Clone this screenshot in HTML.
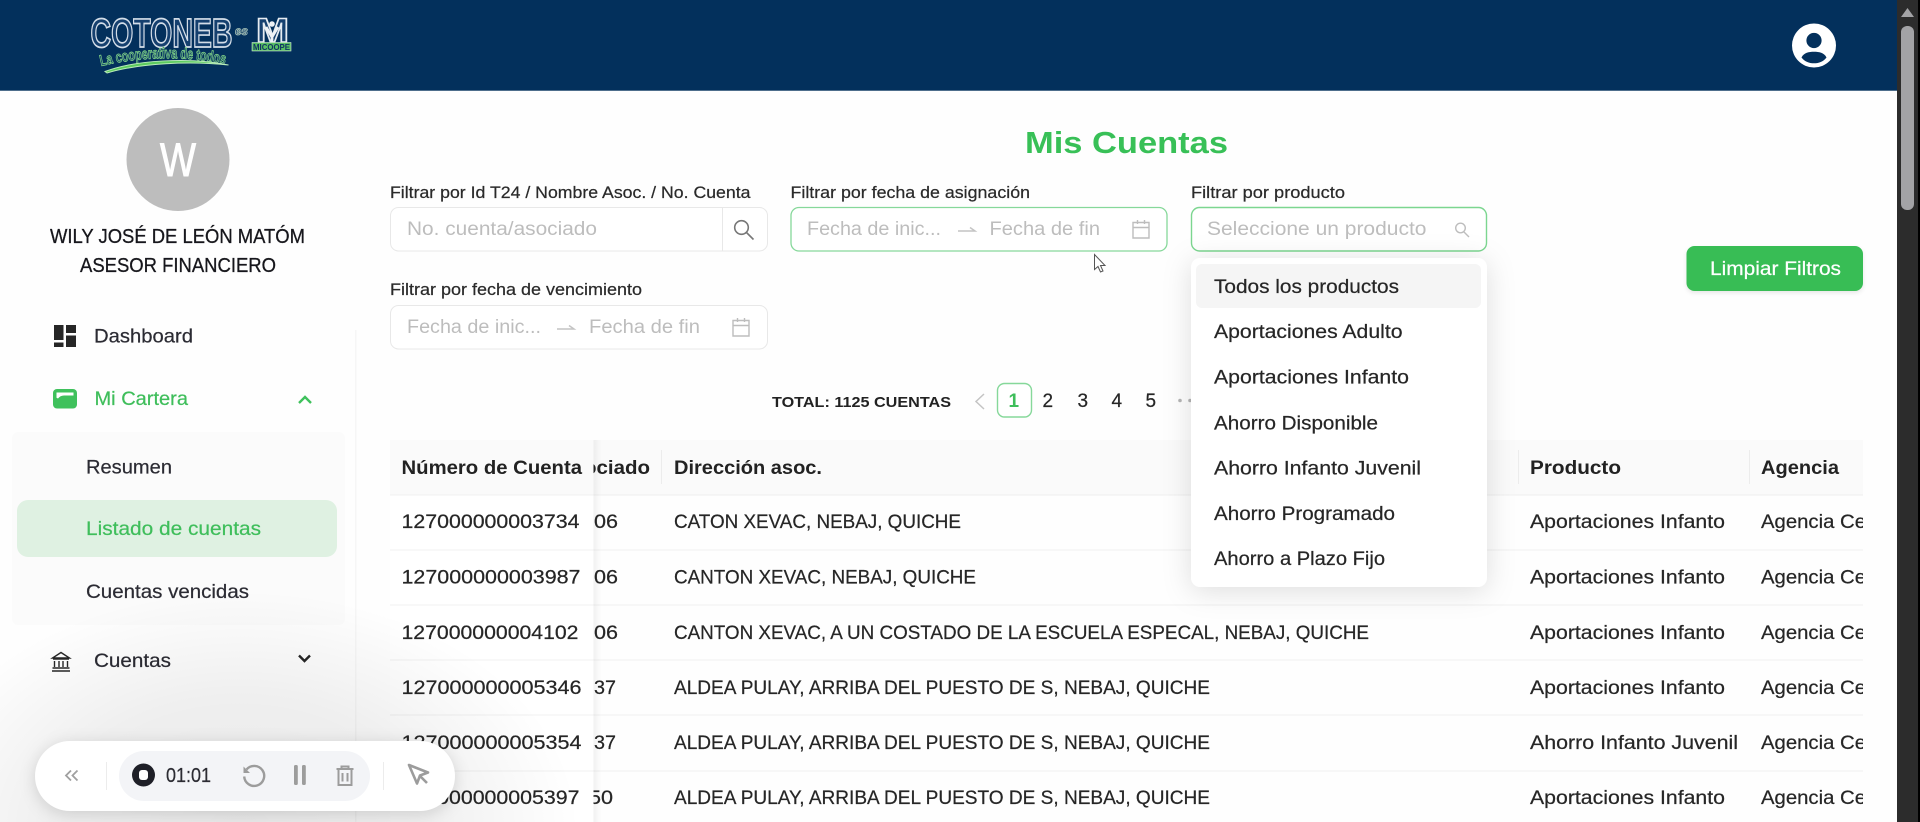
<!DOCTYPE html>
<html lang="es">
<head>
<meta charset="utf-8">
<title>Mis Cuentas</title>
<style>
html,body{margin:0;padding:0;width:1920px;height:822px;overflow:hidden;background:#fefefe}
svg{position:absolute;left:0;top:0;display:block}
text{font-family:"Liberation Sans",sans-serif;color:#262626;fill:currentColor;stroke:currentColor;stroke-width:.22px;font-size:19px}
.ph{color:#bdbdbd;font-size:19px;stroke-width:0}
.lb{font-size:16.5px;color:#2a2a2a}
.b{font-weight:bold;color:#222;stroke-width:0}
.side{font-size:19.5px;color:#2b2b33}
.g{color:#3fbe5b}
</style>
</head>
<body>
<svg width="1920" height="822" viewBox="0 0 1920 822" xmlns="http://www.w3.org/2000/svg">
<defs>
<radialGradient id="vig" gradientUnits="userSpaceOnUse" cx="240" cy="830" r="1" gradientTransform="translate(240 830) scale(340 240) translate(-240 -830)">
<stop offset="0" stop-color="#000" stop-opacity=".085"/>
<stop offset=".55" stop-color="#000" stop-opacity=".06"/>
<stop offset="1" stop-color="#000" stop-opacity="0"/>
</radialGradient>
<linearGradient id="stick" x1="0" x2="1" y1="0" y2="0">
<stop offset="0" stop-color="#000" stop-opacity=".05"/>
<stop offset="1" stop-color="#000" stop-opacity="0"/>
</linearGradient>
<clipPath id="tbl"><rect x="390" y="440" width="1473" height="382"/></clipPath>
<path id="tagarc" d="M101 66Q165 51 228 65"/>
</defs>

<!-- header -->
<rect x="0" y="0" width="1897" height="90.700" fill="#03305c"/>

<!-- logo -->
<text x="90.500" y="47" textLength="142" lengthAdjust="spacingAndGlyphs" style="font-size:41px;font-weight:bold;fill:#15406f;stroke:#d3dde8;stroke-width:1.700px">COTONEB</text>
<text x="235" y="35" textLength="13" lengthAdjust="spacingAndGlyphs" style="font-size:12px;font-style:italic;font-weight:bold;fill:#15406f;stroke:#a9c4b8;stroke-width:.8px">es</text>
<text x="256" y="42" textLength="33" lengthAdjust="spacingAndGlyphs" style="font-size:34px;font-weight:bold;fill:#15406f;stroke:#e6ecf2;stroke-width:1.500px">M</text>
<path d="M266 27l6 10 6-10M272 37v5" fill="none" stroke="#eef2f6" stroke-width="2.800"/>
<circle cx="272" cy="24" r="2.800" fill="#eef2f6"/>
<rect x="252" y="42.500" width="39" height="8.500" fill="#58bf63" stroke="#cfe8d2" stroke-width=".6"/>
<text x="253" y="50" textLength="37" lengthAdjust="spacingAndGlyphs" style="font-size:8.500px;font-weight:bold;fill:#0f3563;stroke-width:0">MICOOPE</text>
<text style="font-size:15.500px;font-weight:bold;fill:#1a4a70;stroke:#86dc86;stroke-width:.8px"><textPath href="#tagarc" textLength="125" lengthAdjust="spacingAndGlyphs">La cooperativa de todos</textPath></text>
<path d="M105 71.500C135 60 190 57 228.500 65C190 61 140 63 107 73Z" fill="#5ccb5e" stroke="#b8ebb8" stroke-width="1"/>

<!-- profile icon -->
<circle cx="1814" cy="45.500" r="22" fill="#fff"/>
<circle cx="1814" cy="40.500" r="7.600" fill="#03305c"/>
<path d="M1801.500 57.500C1804 52.500 1809 51.800 1814 51.800C1819 51.800 1824 52.500 1826.500 57.500C1823.500 61.500 1819 63.300 1814 63.300C1809 63.300 1804.500 61.500 1801.500 57.500Z" fill="#03305c"/>

<!-- scrollbar -->
<rect x="1897" y="0" width="21" height="822" fill="#2c2c2c"/>
<rect x="1918" y="0" width="2" height="822" fill="#000"/>
<path d="M1907.500 8L1914 17H1901Z" fill="#a3a3a6"/>
<rect x="1901" y="26" width="13" height="184" rx="6" fill="#a3a3a6"/>

<!-- sidebar -->
<circle cx="178" cy="159.500" r="51.500" fill="#bdbdbd"/>
<text x="160" y="176" textLength="36" lengthAdjust="spacingAndGlyphs" style="font-size:47px;color:#fff;stroke-width:1px">W</text>
<text x="50" y="243" textLength="255" lengthAdjust="spacingAndGlyphs" style="font-size:20.500px;color:#17171c;stroke-width:.3px">WILY JOSÉ DE LEÓN MATÓM</text>
<text x="80" y="272" textLength="196" lengthAdjust="spacingAndGlyphs" style="font-size:20.500px;color:#17171c;stroke-width:.3px">ASESOR FINANCIERO</text>

<rect x="355" y="330" width="1.500" height="492" fill="#f6f6f6"/>
<path d="M54 325h9.500v15H54zM66 325h10v8H66zM66 335.500h10V347H66zM54 342.500h9.500V347H54z" fill="#262626"/>
<text class="side" x="94" y="342.500" textLength="99" lengthAdjust="spacingAndGlyphs">Dashboard</text>

<rect x="53" y="389" width="24" height="19.500" rx="4" fill="#3fc15c"/>
<path d="M56.500 392.500h17v3h-9.500c-2.500 0-4.500 1-6 3l-1.500-.8z" fill="#fff"/>
<text class="side g" x="94.500" y="405" textLength="93.500" lengthAdjust="spacingAndGlyphs">Mi Cartera</text>
<path d="M299 403l6-6 6 6" fill="none" stroke="#3fc15c" stroke-width="2.400"/>

<rect x="12" y="432" width="333" height="193" rx="6" fill="#fbfbfb"/>
<text class="side" x="86" y="473.500" textLength="86" lengthAdjust="spacingAndGlyphs">Resumen</text>
<rect x="17" y="500" width="320" height="57" rx="11" fill="#dff1e2"/>
<text class="side g" x="86" y="535" textLength="175" lengthAdjust="spacingAndGlyphs">Listado de cuentas</text>
<text class="side" x="86" y="598" textLength="163" lengthAdjust="spacingAndGlyphs">Cuentas vencidas</text>

<path d="M61 652.500l8.500 5.500h-17zM53 659h16M54.500 661v6M59 661v6M63 661v6M67.500 661v6M52.500 668h17M52 671h18" fill="none" stroke="#262626" stroke-width="1.400"/>
<text class="side" x="94" y="667" textLength="77" lengthAdjust="spacingAndGlyphs">Cuentas</text>
<path d="M299 655.500l5.500 5.500 5.500-5.500" fill="none" stroke="#262626" stroke-width="2.400"/>

<!-- title -->
<text x="1025" y="153" textLength="203" lengthAdjust="spacingAndGlyphs" style="font-size:31px;font-weight:bold;color:#38c057;stroke-width:0">Mis Cuentas</text>

<!-- filter labels -->
<text class="lb" x="390" y="198" textLength="360.500" lengthAdjust="spacingAndGlyphs">Filtrar por Id T24 / Nombre Asoc. / No. Cuenta</text>
<text class="lb" x="790.500" y="198" textLength="239.500" lengthAdjust="spacingAndGlyphs">Filtrar por fecha de asignación</text>
<text class="lb" x="1191" y="198" textLength="154" lengthAdjust="spacingAndGlyphs">Filtrar por producto</text>
<text class="lb" x="390" y="295" textLength="252" lengthAdjust="spacingAndGlyphs">Filtrar por fecha de vencimiento</text>

<!-- input 1 -->
<rect x="390.500" y="207.500" width="377" height="43.500" rx="8" fill="#fff" stroke="#e8e8e8"/>
<path d="M722.500 208v43" stroke="#e8e8e8"/>
<text class="ph" x="407" y="235" textLength="190" lengthAdjust="spacingAndGlyphs">No. cuenta/asociado</text>
<circle cx="741.500" cy="227.500" r="6.800" fill="none" stroke="#777" stroke-width="1.600"/>
<path d="M746.500 232.500l7 7" stroke="#777" stroke-width="1.600"/>

<!-- date 1 -->
<rect x="791" y="207.500" width="376" height="43.500" rx="8" fill="#fff" stroke="#86d89a" stroke-width="1.300"/>
<text class="ph" x="807" y="235" textLength="134" lengthAdjust="spacingAndGlyphs">Fecha de inic...</text>
<path d="M958 231h17l-5-3.500" fill="none" stroke="#c4c4c4" stroke-width="1.500"/>
<text class="ph" x="989.500" y="235" textLength="110.500" lengthAdjust="spacingAndGlyphs">Fecha de fin</text>
<path d="M1133 222.500h16v15.500h-16zM1133 227.500h16M1137.500 220v4M1144.500 220v4" fill="none" stroke="#bdbdbd" stroke-width="1.400"/>

<!-- select -->
<rect x="1191.500" y="207.500" width="295" height="43.500" rx="8" fill="#fff" stroke="#7cd690" stroke-width="1.400"/>
<text class="ph" x="1207" y="235" textLength="219.500" lengthAdjust="spacingAndGlyphs">Seleccione un producto</text>
<circle cx="1460.500" cy="228" r="4.800" fill="none" stroke="#bdbdbd" stroke-width="1.400"/>
<path d="M1464 232l5 5" stroke="#bdbdbd" stroke-width="1.400"/>

<!-- date 2 -->
<rect x="390.500" y="305.500" width="377" height="43.500" rx="8" fill="#fff" stroke="#e8e8e8"/>
<text class="ph" x="407" y="333" textLength="134" lengthAdjust="spacingAndGlyphs">Fecha de inic...</text>
<path d="M557 329h17l-5-3.500" fill="none" stroke="#c4c4c4" stroke-width="1.500"/>
<text class="ph" x="589" y="333" textLength="111" lengthAdjust="spacingAndGlyphs">Fecha de fin</text>
<path d="M733 320.500h16v15.500h-16zM733 325.500h16M737.500 318v4M744.500 318v4" fill="none" stroke="#bdbdbd" stroke-width="1.400"/>

<!-- button -->
<rect x="1686.500" y="246" width="176.500" height="45" rx="8" fill="#38bd55" style="filter:drop-shadow(0 2px 2px rgba(0,0,0,.09))"/>
<text x="1710" y="275" textLength="131" lengthAdjust="spacingAndGlyphs" style="font-size:19px;color:#fff">Limpiar Filtros</text>

<!-- pagination -->
<text x="772" y="407" textLength="179" lengthAdjust="spacingAndGlyphs" style="font-size:15px;font-weight:bold;color:#222;stroke-width:0">TOTAL: 1125 CUENTAS</text>
<path d="M984 394l-8 7.500 8 7.500" fill="none" stroke="#c4c4c4" stroke-width="1.500"/>
<rect x="997.500" y="383.500" width="34" height="33.500" rx="7" fill="#fff" stroke="#86d89a" stroke-width="1.400"/>
<text x="1008.500" y="407" style="font-size:19px;font-weight:bold;color:#3fbe5b;stroke-width:0">1</text>
<text x="1042.500" y="407" style="font-size:19px">2</text>
<text x="1077.500" y="407" style="font-size:19px">3</text>
<text x="1111.500" y="407" style="font-size:19px">4</text>
<text x="1145.500" y="407" style="font-size:19px">5</text>
<circle cx="1180" cy="400.500" r="1.800" fill="#b5b5b5"/>
<circle cx="1190" cy="400.500" r="1.800" fill="#b5b5b5"/>

<!-- table -->
<g clip-path="url(#tbl)">
<rect x="390" y="440" width="1473" height="55" fill="#fafafa"/>
<path d="M390 550h1473M390 605h1473M390 660h1473M390 715h1473M390 771h1473" stroke="#f0f0f0"/>
<path d="M390 495h1473" stroke="#efefef"/>
<path d="M661.500 450v34M1518.500 450v34M1749.500 450v34" stroke="#ececec"/>
<text class="b" x="584" y="474" textLength="66" lengthAdjust="spacingAndGlyphs">ociado</text>
<text class="b" x="674" y="474" textLength="148" lengthAdjust="spacingAndGlyphs">Dirección asoc.</text>
<text class="b" x="1530" y="474" textLength="91" lengthAdjust="spacingAndGlyphs">Producto</text>
<text class="b" x="1761" y="474" textLength="78" lengthAdjust="spacingAndGlyphs">Agencia</text>

<text x="594" y="528" textLength="24" lengthAdjust="spacingAndGlyphs">06</text>
<text x="594" y="583.500" textLength="24" lengthAdjust="spacingAndGlyphs">06</text>
<text x="594" y="639" textLength="24" lengthAdjust="spacingAndGlyphs">06</text>
<text x="594" y="694" textLength="22" lengthAdjust="spacingAndGlyphs">37</text>
<text x="594" y="749" textLength="22" lengthAdjust="spacingAndGlyphs">37</text>
<text x="589" y="804" textLength="24" lengthAdjust="spacingAndGlyphs">50</text>

<text x="674" y="528" textLength="287" lengthAdjust="spacingAndGlyphs">CATON XEVAC, NEBAJ, QUICHE</text>
<text x="674" y="583.500" textLength="302" lengthAdjust="spacingAndGlyphs">CANTON XEVAC, NEBAJ, QUICHE</text>
<text x="674" y="639" textLength="695" lengthAdjust="spacingAndGlyphs">CANTON XEVAC, A UN COSTADO DE LA ESCUELA ESPECAL, NEBAJ, QUICHE</text>
<text x="674" y="694" textLength="536" lengthAdjust="spacingAndGlyphs">ALDEA PULAY, ARRIBA DEL PUESTO DE S, NEBAJ, QUICHE</text>
<text x="674" y="749" textLength="536" lengthAdjust="spacingAndGlyphs">ALDEA PULAY, ARRIBA DEL PUESTO DE S, NEBAJ, QUICHE</text>
<text x="674" y="804" textLength="536" lengthAdjust="spacingAndGlyphs">ALDEA PULAY, ARRIBA DEL PUESTO DE S, NEBAJ, QUICHE</text>

<text x="1530" y="528" textLength="195" lengthAdjust="spacingAndGlyphs">Aportaciones Infanto</text>
<text x="1530" y="583.500" textLength="195" lengthAdjust="spacingAndGlyphs">Aportaciones Infanto</text>
<text x="1530" y="639" textLength="195" lengthAdjust="spacingAndGlyphs">Aportaciones Infanto</text>
<text x="1530" y="694" textLength="195" lengthAdjust="spacingAndGlyphs">Aportaciones Infanto</text>
<text x="1530" y="749" textLength="208" lengthAdjust="spacingAndGlyphs">Ahorro Infanto Juvenil</text>
<text x="1530" y="804" textLength="195" lengthAdjust="spacingAndGlyphs">Aportaciones Infanto</text>

<text x="1761" y="528" textLength="105" lengthAdjust="spacingAndGlyphs">Agencia Ce</text>
<text x="1761" y="583.500" textLength="105" lengthAdjust="spacingAndGlyphs">Agencia Ce</text>
<text x="1761" y="639" textLength="105" lengthAdjust="spacingAndGlyphs">Agencia Ce</text>
<text x="1761" y="694" textLength="105" lengthAdjust="spacingAndGlyphs">Agencia Ce</text>
<text x="1761" y="749" textLength="105" lengthAdjust="spacingAndGlyphs">Agencia Ce</text>
<text x="1761" y="804" textLength="105" lengthAdjust="spacingAndGlyphs">Agencia Ce</text>

<!-- sticky column -->
<rect x="390" y="440" width="203.500" height="382" fill="#fff"/>
<rect x="390" y="440" width="203.500" height="55" fill="#fafafa"/>
<path d="M390 550h204M390 605h204M390 660h204M390 715h204M390 771h204M390 495h204" stroke="#f0f0f0"/>
<rect x="593.500" y="440" width="8" height="382" fill="url(#stick)"/>
<text class="b" x="401.500" y="474" textLength="180.500" lengthAdjust="spacingAndGlyphs">Número de Cuenta</text>
<text x="401.500" y="528" textLength="178" lengthAdjust="spacingAndGlyphs">127000000003734</text>
<text x="401.500" y="583.500" textLength="179" lengthAdjust="spacingAndGlyphs">127000000003987</text>
<text x="401.500" y="639" textLength="177" lengthAdjust="spacingAndGlyphs">127000000004102</text>
<text x="401.500" y="694" textLength="180" lengthAdjust="spacingAndGlyphs">127000000005346</text>
<text x="401.500" y="749" textLength="180" lengthAdjust="spacingAndGlyphs">127000000005354</text>
<text x="401.500" y="804" textLength="178" lengthAdjust="spacingAndGlyphs">127000000005397</text>
</g>

<!-- dropdown -->
<rect x="1191" y="258" width="296" height="329" rx="9" fill="#fff" style="filter:drop-shadow(0 4px 14px rgba(0,0,0,.13))"/>
<rect x="1196" y="264" width="285" height="44" rx="6" fill="#f5f5f5"/>
<text x="1214" y="293" textLength="185" lengthAdjust="spacingAndGlyphs">Todos los productos</text>
<text x="1214" y="338" textLength="188.500" lengthAdjust="spacingAndGlyphs">Aportaciones Adulto</text>
<text x="1214" y="383.500" textLength="195" lengthAdjust="spacingAndGlyphs">Aportaciones Infanto</text>
<text x="1214" y="429.500" textLength="164" lengthAdjust="spacingAndGlyphs">Ahorro Disponible</text>
<text x="1214" y="474.500" textLength="207" lengthAdjust="spacingAndGlyphs">Ahorro Infanto Juvenil</text>
<text x="1214" y="520" textLength="181" lengthAdjust="spacingAndGlyphs">Ahorro Programado</text>
<text x="1214" y="565" textLength="171" lengthAdjust="spacingAndGlyphs">Ahorro a Plazo Fijo</text>

<!-- mouse cursor -->
<path d="M1094.500 254.500v15l3.500-3 2.500 5.500 2.500-1-2.500-5.500h4.500z" fill="#fff" stroke="#555" stroke-width="1"/>

<!-- vignette -->
<rect x="0" y="560" width="620" height="262" fill="url(#vig)"/>

<!-- recorder -->
<rect x="35" y="741" width="420" height="70" rx="35" fill="#fff" style="filter:drop-shadow(0 3px 8px rgba(0,0,0,.14))"/>
<rect x="119" y="751" width="251" height="50" rx="25" fill="#f3f4f7"/>
<path d="M69 770.500l-4.500 5 4.500 5M75 770.500l-4.500 5 4.500 5M78 770.500l-4.500 5 4.500 5" fill="none" stroke="#a0a0a0" stroke-width="0"/>
<path d="M71 770.500l-5 5 5 5M77.500 770.500l-5 5 5 5" fill="none" stroke="#a0a0a0" stroke-width="1.800"/>
<path d="M106.500 762v28M383.500 762v28" stroke="#ececec"/>
<circle cx="143.500" cy="775" r="11.500" fill="#1e1f27"/>
<rect x="139" y="770" width="9" height="10" rx="3" fill="#fff"/>
<text x="166" y="782" textLength="45" lengthAdjust="spacingAndGlyphs" style="font-size:20px;color:#2c2c33">01:01</text>
<path d="M246.500 769.500a10 10 0 1 1-2.300 7" fill="none" stroke="#9c9c9c" stroke-width="2.400"/>
<path d="M243.500 766.500v6.500h6.500z" fill="#9c9c9c"/>
<rect x="294" y="765" width="3.800" height="20" rx="1.500" fill="#9c9c9c"/>
<rect x="302" y="765" width="3.800" height="20" rx="1.500" fill="#9c9c9c"/>
<path d="M336.500 769h17M341.500 769v-2.500h7v2.500M338.500 769.500v15.500h13v-15.500M342.500 773v8.500M347.500 773v8.500" fill="none" stroke="#9c9c9c" stroke-width="2"/>
<path d="M409 765l19 7.500-8 3-3 8zM420 776l7 7" fill="none" stroke="#9c9c9c" stroke-width="2.600" stroke-linejoin="round"/>
</svg>
</body>
</html>
